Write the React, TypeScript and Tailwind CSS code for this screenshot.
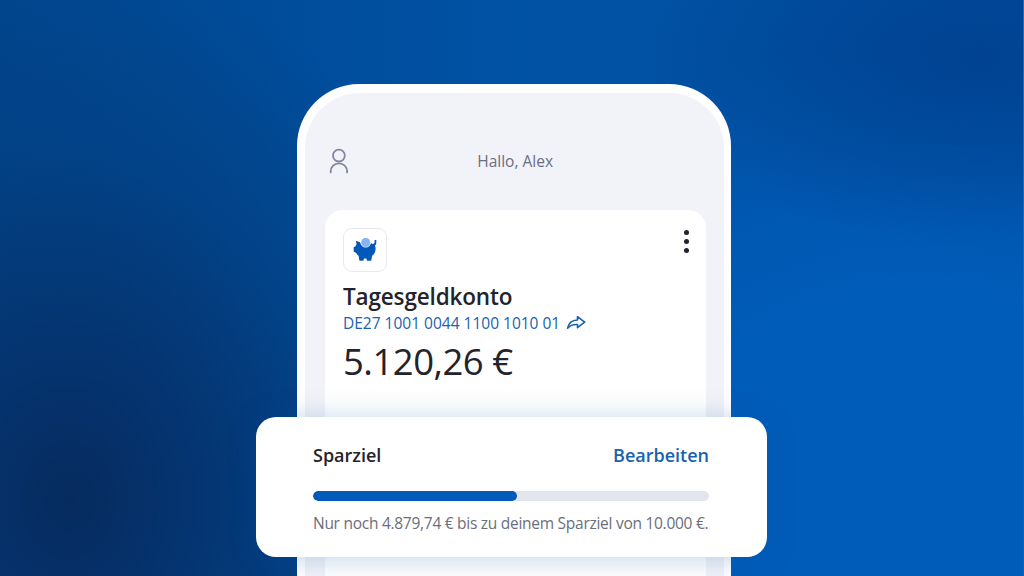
const account = {
  name: 'Tagesgeldkonto',
  iban: 'DE27 1001 0044 1100 1010 01',
  balance: '5.120,26 €'
};

const goal = {
  progress: 51.5,
  hint: 'Nur noch 4.879,74 € bis zu deinem Sparziel von 10.000 €.'
};

function UserIcon() {
  return (
    <svg width="20" height="26" viewBox="0 0 20 26" fill="none" stroke="#83869f" strokeWidth="1.8" strokeLinecap="round">
      <circle cx="9.9" cy="7.6" r="5.9" />
      <path d="M1.7 24.4v-.9a8.2 8.2 0 0 1 16.4 0v.9" />
    </svg>
  );
}

function PiggyIcon() {
  return (
    <svg width="24" height="24" viewBox="0 0 24 24" fill="none">
      <path
        d="M2.8 2.8 7 4.3C8.7 9 16 9 17.700 4.900c.8.3 1.400.7 2 1.200 1.300-.1 1.900-.8 1.900-2.300V2h1.700v1.700c.1 1.800-.3 3-1.300 3.900.4 1 .6 2 .6 3.100 0 3.300-1.500 5.400-3.500 7l-.9 5.100H14l-.6-2.300H11l-.7 2.300H6.500l-.9-5.100c-1.100-.8-2-1.800-2.600-3l-2.300-.9V9.100l1.700-.6c.3-.9.700-1.500 1.200-2.200z"
        fill="#0059b8"
      />
      <circle cx="12.700" cy="4.400" r="5.200" fill="#fff" />
      <circle cx="12.700" cy="4.400" r="4.600" fill="#86b5ef" />
    </svg>
  );
}

function ShareIcon() {
  return (
    <svg width="20" height="16" viewBox="0 0 20 16" fill="none" stroke="#1a61b0" strokeWidth="1.6" strokeLinejoin="round">
      <path d="M11.500 1.700 18.700 7.200 11.500 12.700V9.500C7.300 9.200 4.300 10.100 1.600 13.200 2.500 8.300 5.800 5.200 11.500 5z" />
    </svg>
  );
}

function Header() {
  return (
    <div className="grid h-[117px] grid-cols-[1fr_auto_1fr] items-start pl-6 pr-[23px]">
      <div className="pt-[55px]">
        <UserIcon />
      </div>
      <p className="pt-[56px] text-[15.500px] leading-6 text-[#6b6e82]">Hallo, Alex</p>
    </div>
  );
}

function AccountCard() {
  return (
    <div className="ml-5 mr-[18.500px] h-[400px] rounded-t-[18px] bg-white pl-[18px] pr-[17px] pt-[18px]">
      <div className="flex items-start justify-between">
        <div className="flex h-11 w-11 items-center justify-center rounded-[9px] border-[1.500px] border-[#e8e9f0]">
          <PiggyIcon />
        </div>
        <div className="flex flex-col gap-1 pt-[1.500px]">
          <span className="h-[5px] w-[5px] rounded-full bg-[#22232d]" />
          <span className="h-[5px] w-[5px] rounded-full bg-[#22232d]" />
          <span className="h-[5px] w-[5px] rounded-full bg-[#22232d]" />
        </div>
      </div>
      <h1 className="mt-2.5 text-[22.500px] font-semibold leading-[30px] tracking-[-0.150px] text-[#22232d]">{account.name}</h1>
      <div className="flex items-center gap-1.5 text-[#1a61b0]">
        <span className="whitespace-nowrap text-[15.500px] leading-[22px]">{account.iban}</span>
        <ShareIcon />
      </div>
      <p className="mt-1.5 text-[36.500px] leading-[42px] tracking-[-0.5px] text-[#22232d]">{account.balance}</p>
    </div>
  );
}

function GoalCard() {
  return (
    <div className="absolute left-[255.700px] top-[416.500px] h-[140.500px] w-[511.300px] rounded-[20px] bg-white pl-[57.300px] pr-[58px] pt-[26.500px] shadow-[0_2px_28px_rgba(0,80,165,0.25)]">
      <div className="flex items-center justify-between text-[18px] font-semibold leading-6">
        <h2 className="text-[#22232d]">Sparziel</h2>
        <button className="text-[#1a61b0]">Bearbeiten</button>
      </div>
      <div className="mt-[23.500px] h-2.5 w-full overflow-hidden rounded-full bg-[#e2e5ee]">
        <div className="h-full rounded-full bg-[#005bb8]" style={{ width: `${goal.progress}%` }} />
      </div>
      <p className="mt-2.5 whitespace-nowrap text-[15.500px] leading-6 tracking-[-0.270px] text-[#6b6e7b]">{goal.hint}</p>
    </div>
  );
}

export default function App() {
  return (
    <div className="relative h-[576px] w-[1024px] overflow-hidden border-r border-white/20 bg-[#0050a3] bg-[radial-gradient(ellipse_440px_540px_at_70px_500px,#062b5f_0%,#05326ccc_35%,#043c7a80_65%,#00468f00_100%),radial-gradient(ellipse_340px_190px_at_980px_60px,#003f8dcc_0%,#00408e80_45%,#00408e00_100%),radial-gradient(ellipse_560px_440px_at_920px_480px,#005cb9_0%,#005cb9_45%,#005cb900_100%),linear-gradient(90deg,#00468f_0%,#0052a5_50%,#0050a3_100%)] font-['Open_Sans','Noto_Sans',sans-serif]">
      <div className="ml-[297.300px] mt-[84.300px] h-[520px] w-[434px] overflow-hidden rounded-t-[62px] bg-white pl-[7.700px] pr-[7px] pt-[9px]">
        <div className="h-full rounded-t-[55px] bg-[#f2f3f8]">
          <Header />
          <AccountCard />
        </div>
      </div>
      <GoalCard />
    </div>
  );
}
